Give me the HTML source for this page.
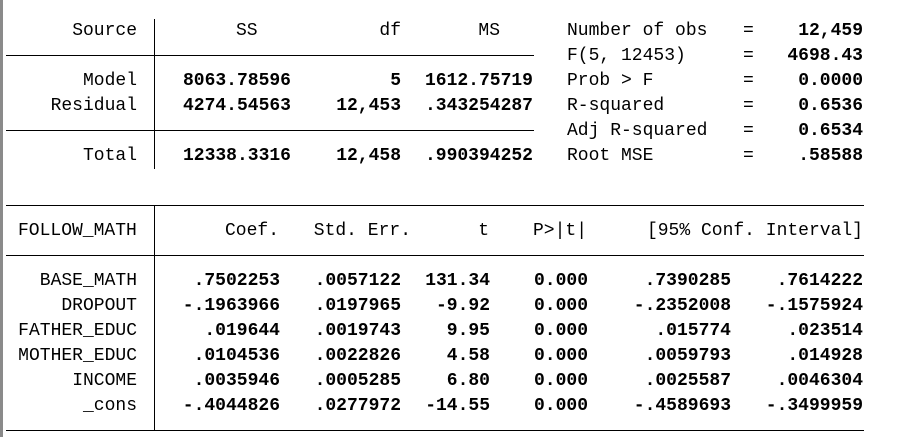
<!DOCTYPE html>
<html><head><meta charset="utf-8"><style>
body{margin:0;width:897px;height:437px;background:#fff;position:relative;overflow:hidden;font-family:"Liberation Mono",monospace;font-size:18px;color:#000}
.c{position:absolute;line-height:25px;white-space:pre}
.r{text-align:right}
.b{font-weight:bold}
.h{position:absolute;height:1px;background:#000}
.v{position:absolute;width:1px;background:#000}
</style></head><body>
<div style="position:absolute;left:0;top:0;width:3px;height:437px;background:#8a8a8a"></div>
<div class="h" style="left:6px;width:528px;top:55px"></div>
<div class="h" style="left:6px;width:528px;top:130px"></div>
<div class="v" style="left:154px;top:19px;height:150px"></div>
<div class="h" style="left:6px;width:858px;top:205px"></div>
<div class="h" style="left:6px;width:858px;top:255px"></div>
<div class="h" style="left:6px;width:858px;top:430px"></div>
<div class="v" style="left:154px;top:205px;height:225px"></div>

<div class="c r" style="right:760px;top:19px">Source</div>
<div class="c" style="left:236px;top:19px">SS</div>
<div class="c r" style="right:496px;top:19px">df</div>
<div class="c r" style="right:397px;top:19px">MS</div>

<div class="c r" style="right:760px;top:69px">Model<br>Residual<br><br>Total</div>
<div class="c r b" style="right:606px;top:69px">8063.78596<br>4274.54563<br><br>12338.3316</div>
<div class="c r b" style="right:496px;top:69px">5<br>12,453<br><br>12,458</div>
<div class="c r b" style="right:364px;top:69px">1612.75719<br>.343254287<br><br>.990394252</div>

<div class="c" style="left:567px;top:19px">Number of obs<br>F(5, 12453)<br>Prob &gt; F<br>R-squared<br>Adj R-squared<br>Root MSE</div>
<div class="c" style="left:743px;top:19px">=<br>=<br>=<br>=<br>=<br>=</div>
<div class="c r b" style="right:34px;top:19px">12,459<br>4698.43<br>0.0000<br>0.6536<br>0.6534<br>.58588</div>

<div class="c" style="left:18px;top:219px">FOLLOW_MATH</div>
<div class="c r" style="right:618px;top:219px">Coef.</div>
<div class="c r" style="right:486px;top:219px">Std. Err.</div>
<div class="c r" style="right:408px;top:219px">t</div>
<div class="c r" style="right:310px;top:219px">P&gt;|t|</div>
<div class="c r" style="right:34px;top:219px">[95% Conf. Interval]</div>

<div class="c r" style="right:760px;top:269px">BASE_MATH<br>DROPOUT<br>FATHER_EDUC<br>MOTHER_EDUC<br>INCOME<br>_cons</div>
<div class="c r b" style="right:617px;top:269px">.7502253<br>-.1963966<br>.019644<br>.0104536<br>.0035946<br>-.4044826</div>
<div class="c r b" style="right:496px;top:269px">.0057122<br>.0197965<br>.0019743<br>.0022826<br>.0005285<br>.0277972</div>
<div class="c r b" style="right:407px;top:269px">131.34<br>-9.92<br>9.95<br>4.58<br>6.80<br>-14.55</div>
<div class="c r b" style="right:309px;top:269px">0.000<br>0.000<br>0.000<br>0.000<br>0.000<br>0.000</div>
<div class="c r b" style="right:166px;top:269px">.7390285<br>-.2352008<br>.015774<br>.0059793<br>.0025587<br>-.4589693</div>
<div class="c r b" style="right:34px;top:269px">.7614222<br>-.1575924<br>.023514<br>.014928<br>.0046304<br>-.3499959</div>
</body></html>
